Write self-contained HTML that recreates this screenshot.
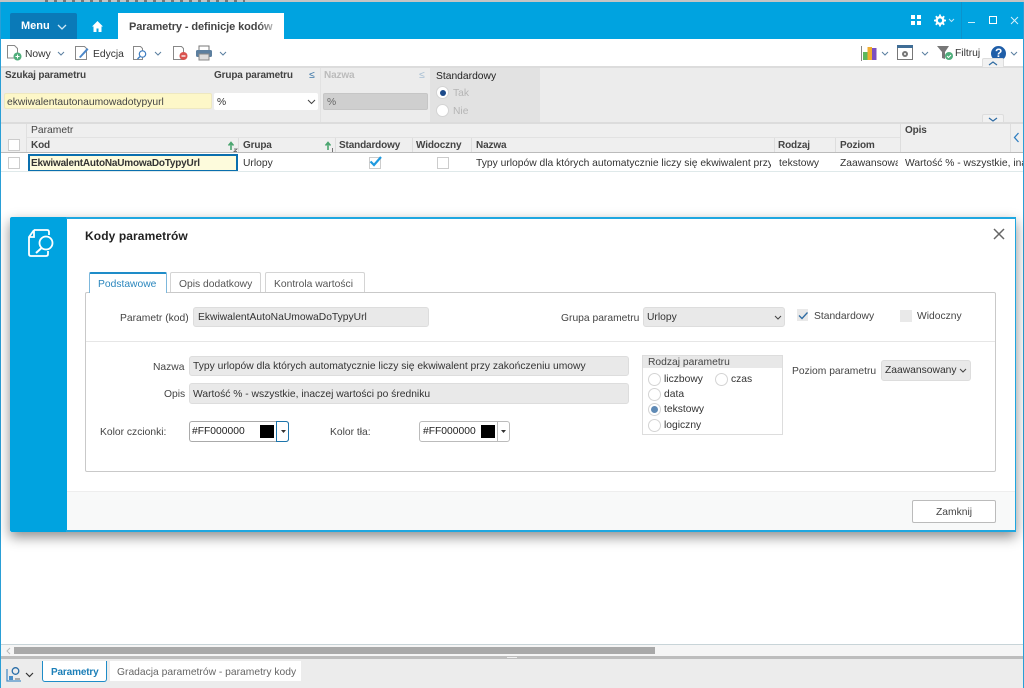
<!DOCTYPE html>
<html><head><meta charset="utf-8"><style>
html,body{margin:0;padding:0;background:#fff}
#p{position:relative;width:1024px;height:688px;overflow:hidden;background:#fff;font-family:"Liberation Sans",sans-serif;font-size:10.3px;color:#333;filter:blur(.3px)}
#p div,#p span.a,#p svg{position:absolute}
.t{white-space:nowrap;line-height:12px;margin-top:2px}
.b{font-weight:bold;font-size:10px;letter-spacing:-.15px}
.cb{width:10px;height:10px;border:1px solid #ccc;background:#fff;box-sizing:content-box}
.rd{width:11px;height:11px;border:1px solid #d4d4d4;border-radius:50%;background:#fff;margin-top:-1px}
.in{background:#e9e9e9;border:1px solid #ddd;border-radius:3px;box-sizing:border-box}
</style></head><body><div id="p">

<div style="left:0;top:0;width:1024px;height:2px;background:#c4c4c4"></div>
<div style="left:45px;top:0;width:200px;height:2px;background:repeating-linear-gradient(90deg,#777 0 3px,#c4c4c4 3px 9px)"></div>
<div style="left:0;top:2px;width:1024px;height:37px;background:#00a3e0"></div>
<div style="left:0;top:2px;width:1px;height:686px;background:#2a9fd6"></div>
<div style="left:1023px;top:2px;width:1px;height:686px;background:#2a9fd6"></div>

<div style="left:10px;top:13px;width:67px;height:26px;background:#0a7ab8;border-radius:2px 2px 0 0"></div>
<div class="t b" style="left:21px;top:18px;color:#fff;font-size:11px;letter-spacing:0">Menu</div>
<svg style="left:57px;top:24px" width="10" height="6"><path d="M1 1l4 4 4-4" fill="none" stroke="#cfe8f5" stroke-width="1.300"/></svg>
<svg style="left:91px;top:20px" width="13" height="13"><path d="M6.500 1L1 6.500h1.500V12h3V8.500h2V12h3V6.500H12z" fill="#fff"/></svg>
<div style="left:118px;top:13px;width:166px;height:26px;background:#fff"></div>
<div class="t b" style="left:129px;top:19px;font-size:11px;color:#444;width:146px;overflow:hidden;letter-spacing:-.1px">Parametry - definicje kodów</div>
<div style="left:258px;top:14px;width:24px;height:24px;background:linear-gradient(90deg,rgba(255,255,255,0),#fff)"></div>

<svg style="left:911px;top:15px" width="11" height="11"><path d="M0 0h4v4H0zM6 0h4v4H6zM0 6h4v4H0zM6 6h4v4H6z" fill="#fff"/></svg>
<svg style="left:934px;top:14px" width="22" height="13"><circle cx="6" cy="6.500" r="3.300" fill="none" stroke="#fff" stroke-width="2.400"/><path d="M6 .5v2M6 10.500v2M0 6.500h2M10 6.500h2M1.800 2.300l1.400 1.400M8.800 9.300l1.400 1.400M10.200 2.300L8.800 3.700M3.200 9.300l-1.400 1.400" stroke="#fff" stroke-width="1.800"/><path d="M15 5l2.500 2.500L20 5" fill="none" stroke="#bfe6f7"/></svg>
<div style="left:961px;top:2px;width:1px;height:37px;background:#0b93cc"></div>
<div style="left:968px;top:22px;width:7px;height:1px;background:#cdeefa"></div>
<div style="left:989px;top:16px;width:6px;height:6px;border:1px solid #fff"></div>
<svg style="left:1010px;top:16px" width="9" height="9"><path d="M1 1l7 7M8 1L1 8" stroke="#d5f0fb" stroke-width="1"/></svg>

<!-- toolbar -->
<div style="left:1px;top:39px;width:1022px;height:27px;background:#fff"></div>
<div style="left:1px;top:66px;width:1022px;height:2px;background:#dcdcdc"></div>
<svg style="left:7px;top:45px" width="15" height="16"><path d="M.5.500h7l3 3V13H.5z" fill="#fff" stroke="#888"/><circle cx="10.500" cy="11.500" r="4" fill="#4fae7b"/><path d="M8.500 11.500h4M10.500 9.500v4" stroke="#fff"/></svg>
<div class="t" style="left:25px;top:47px">Nowy</div>
<svg style="left:57px;top:51px" width="8" height="5"><path d="M1 1l3 3 3-3" fill="none" stroke="#5a7fa0"/></svg>
<svg style="left:75px;top:45px" width="15" height="16"><path d="M.5 1.500h9l2 2V14.500H.5z" fill="#fff" stroke="#888"/><path d="M4 12L12 3l1.500 1.500L5.500 13z" fill="#4a86c8"/></svg>
<div class="t" style="left:93px;top:47px">Edycja</div>
<svg style="left:133px;top:45px" width="15" height="16"><path d="M.5 1.500h7l2 2V14.500H.5z" fill="#fff" stroke="#888"/><circle cx="9.500" cy="9" r="3.200" fill="#fff" stroke="#3d7cc0" stroke-width="1.200"/><path d="M7 11.500l-2.500 2.500" stroke="#3d7cc0" stroke-width="1.300"/></svg>
<svg style="left:154px;top:51px" width="8" height="5"><path d="M1 1l3 3 3-3" fill="none" stroke="#5a7fa0"/></svg>
<svg style="left:173px;top:45px" width="15" height="16"><path d="M.5 1.500h8l2 2V14.500H.5z" fill="#fff" stroke="#888"/><circle cx="10.500" cy="11" r="4" fill="#d9534f"/><path d="M8.500 11h4" stroke="#fff" stroke-width="1.300"/></svg>
<svg style="left:196px;top:45px" width="16" height="16"><rect x="3" y="1" width="10" height="5" fill="#fff" stroke="#777"/><rect x="0" y="5" width="16" height="7" rx="1.500" fill="#5c7f9f"/><rect x="3" y="9" width="10" height="6" fill="#ddd" stroke="#888"/></svg>
<svg style="left:219px;top:51px" width="8" height="5"><path d="M1 1l3 3 3-3" fill="none" stroke="#5a7fa0"/></svg>

<svg style="left:861px;top:46px" width="17" height="15"><path d="M.5 0v15" stroke="#888"/><rect x="2" y="6" width="4.500" height="8" fill="#5cb85c"/><rect x="6.500" y="1" width="4.500" height="13" fill="#f0ad30"/><rect x="11" y="2" width="4.500" height="12" fill="#7b4fc0"/></svg>
<svg style="left:881px;top:51px" width="8" height="5"><path d="M1 1l3 3 3-3" fill="none" stroke="#5a7fa0"/></svg>
<svg style="left:897px;top:45px" width="17" height="16"><rect x=".5" y="1" width="15" height="13.500" fill="#fff" stroke="#777"/><rect x="0" y="0" width="16" height="3" fill="#3f6d96"/><circle cx="8" cy="9" r="3" fill="#777"/><circle cx="8" cy="9" r="1" fill="#fff"/></svg>
<svg style="left:921px;top:51px" width="8" height="5"><path d="M1 1l3 3 3-3" fill="none" stroke="#5a7fa0"/></svg>
<svg style="left:937px;top:46px" width="18" height="15"><path d="M0 0h12L8 6v7L5 12V6z" fill="#777"/><circle cx="12" cy="10" r="4" fill="#4fae7b"/><path d="M10 10l1.500 1.500L14 9" fill="none" stroke="#fff"/></svg>
<div class="t" style="left:955px;top:46px">Filtruj</div>
<div style="left:991px;top:46px;width:15px;height:15px;border-radius:50%;background:#1f5ea8"></div>
<div class="t b" style="left:995px;top:45px;color:#fff;font-size:12px">?</div>
<svg style="left:1010px;top:51px" width="8" height="5"><path d="M1 1l3 3 3-3" fill="none" stroke="#5a7fa0"/></svg>
<div style="left:982px;top:58px;width:22px;height:9px;background:#f1f1f1;border:1px solid #ddd;border-bottom:0;border-radius:2px 2px 0 0;box-sizing:border-box"></div>
<svg style="left:988px;top:61px" width="10" height="5"><path d="M1 4l4-3 4 3" fill="none" stroke="#2f6ca3" stroke-width="1.200"/></svg>

<!-- filter -->
<div style="left:1px;top:68px;width:1022px;height:54px;background:#ececec"></div>
<div style="left:430px;top:68px;width:110px;height:54px;background:#e2e2e2"></div>
<div style="left:320px;top:68px;width:1px;height:54px;background:#e2e2e2"></div>
<div class="t b" style="left:5px;top:68px;color:#444">Szukaj parametru</div>
<div class="t b" style="left:214px;top:68px;color:#444">Grupa parametru</div>
<div class="t" style="left:309px;top:68px;color:#3f78a8">≤</div>
<div class="t b" style="left:324px;top:68px;color:#bbb">Nazwa</div>
<div class="t" style="left:419px;top:68px;color:#a9c0d4">≤</div>
<div class="t" style="left:436px;top:69px;color:#222">Standardowy</div>
<div style="left:4px;top:93px;width:208px;height:16px;background:#fdf7c8;border:1px solid #eee8c0;box-sizing:border-box;border-radius:2px"></div>
<div class="t" style="left:7px;top:95px;color:#444">ekwiwalentautonaumowadotypyurl</div>
<div style="left:214px;top:93px;width:104px;height:17px;background:#fff;border-radius:2px"></div>
<div class="t" style="left:217px;top:95px">%</div>
<svg style="left:307px;top:99px" width="9" height="6"><path d="M1 1l3.500 3.500L8 1" fill="none" stroke="#444"/></svg>
<div style="left:323px;top:93px;width:105px;height:17px;background:#cfcfcf;border:1px solid #c6c6c6;box-sizing:border-box;border-radius:2px"></div>
<div class="t" style="left:327px;top:95px;color:#666">%</div>
<div class="rd" style="left:436px;top:87px"></div>
<div style="left:440px;top:90px;width:6px;height:6px;border-radius:50%;background:#1c4a8a"></div>
<div class="t" style="left:453px;top:86px;color:#b5b5b5">Tak</div>
<div class="rd" style="left:436px;top:105px"></div>
<div class="t" style="left:453px;top:104px;color:#b5b5b5">Nie</div>
<div style="left:982px;top:114px;width:22px;height:9px;background:#f1f1f1;border:1px solid #ddd;border-bottom:0;border-radius:2px 2px 0 0;box-sizing:border-box"></div>
<svg style="left:988px;top:117px" width="10" height="5"><path d="M1 1l4 3 4-3" fill="none" stroke="#2f6ca3" stroke-width="1.200"/></svg>

<!-- grid head -->
<div style="left:1px;top:122px;width:1022px;height:2px;background:#dcdcdc"></div>
<div style="left:1px;top:124px;width:1022px;height:28px;background:#efefef"></div>
<div style="left:26px;top:137px;width:1px;height:15px;background:#ddd"></div>
<div style="left:26px;top:124px;width:1px;height:28px;background:#e0e0e0"></div>
<div style="left:27px;top:137px;width:873px;height:1px;background:#e2e2e2"></div>
<div style="left:1px;top:152px;width:1022px;height:1px;background:#bbb"></div>
<div class="t" style="left:31px;top:123px;color:#444">Parametr</div>
<div class="t b" style="left:31px;top:138px;color:#444">Kod</div>
<div class="cb" style="left:8px;top:139px"></div>
<div class="t b" style="left:243px;top:138px;color:#444">Grupa</div>
<div class="t b" style="left:339px;top:138px;color:#444">Standardowy</div>
<div class="t b" style="left:416px;top:138px;color:#444">Widoczny</div>
<div class="t b" style="left:476px;top:138px;color:#444">Nazwa</div>
<div class="t b" style="left:778px;top:138px;color:#444">Rodzaj</div>
<div class="t b" style="left:840px;top:138px;color:#444">Poziom</div>
<div class="t b" style="left:905px;top:123px;color:#444">Opis</div>
<div style="left:238px;top:138px;width:1px;height:14px;background:#ddd"></div>
<div style="left:335px;top:138px;width:1px;height:14px;background:#ddd"></div>
<div style="left:412px;top:138px;width:1px;height:14px;background:#ddd"></div>
<div style="left:471px;top:138px;width:1px;height:14px;background:#ddd"></div>
<div style="left:774px;top:138px;width:1px;height:14px;background:#ddd"></div>
<div style="left:835px;top:138px;width:1px;height:14px;background:#ddd"></div>
<div style="left:900px;top:124px;width:1px;height:28px;background:#ddd"></div>
<div style="left:1010px;top:124px;width:1px;height:28px;background:#ddd"></div>
<svg style="left:1013px;top:132px" width="7" height="11"><path d="M5.500 1L1.500 5.500 5.500 10" fill="none" stroke="#2f7ec0" stroke-width="1.300"/></svg>
<svg style="left:227px;top:141px" width="11" height="11"><path d="M4 9V2M1.500 4.500L4 1.500 6.500 4.500" fill="none" stroke="#4aa56f" stroke-width="1.600"/><path d="M7 8h3l-3 2.500h3" fill="none" stroke="#555" stroke-width=".7"/></svg>
<svg style="left:324px;top:141px" width="11" height="11"><path d="M4 9V2M1.500 4.500L4 1.500 6.500 4.500" fill="none" stroke="#4aa56f" stroke-width="1.600"/><path d="M8.500 7v4" stroke="#555" stroke-width=".8"/></svg>

<!-- row -->
<div class="cb" style="left:8px;top:157px"></div>
<div style="left:28px;top:154px;width:210px;height:18px;background:#fdfbdc;border:2px solid #0a6fae;box-sizing:border-box"></div>
<div class="t b" style="left:31px;top:156px;color:#333;letter-spacing:-.2px">EkwiwalentAutoNaUmowaDoTypyUrl</div>
<div class="t" style="left:243px;top:156px">Urlopy</div>
<div class="cb" style="left:369px;top:157px"></div>
<svg style="left:369px;top:155px" width="13" height="12"><path d="M1.500 6.500L5 10 12 2" fill="none" stroke="#1e9ae0" stroke-width="2.200"/></svg>
<div class="cb" style="left:437px;top:157px"></div>
<div class="t" style="left:476px;top:156px;width:295px;overflow:hidden">Typy urlopów dla których automatycznie liczy się ekwiwalent przy zakończeniu umowy</div>
<div class="t" style="left:779px;top:156px">tekstowy</div>
<div class="t" style="left:840px;top:156px;width:58px;overflow:hidden">Zaawansowany</div>
<div class="t" style="left:905px;top:156px;width:118px;overflow:hidden">Wartość % - wszystkie, inaczej wartości po średniku</div>
<div style="left:1px;top:171px;width:1022px;height:1px;background:#dfe9ea"></div>

<!-- dialog -->
<div style="left:10px;top:217px;width:1006px;height:315px;background:#fff;box-shadow:0 5px 12px rgba(0,0,0,.45)"></div>
<div style="left:10px;top:217px;width:57px;height:315px;background:#00a3e0;border-radius:2px 0 0 2px"></div>
<div style="left:66px;top:217px;width:950px;height:2px;background:#1fa7e0"></div>
<div style="left:66px;top:530px;width:950px;height:2px;background:#1fa7e0"></div>
<div style="left:1015px;top:217px;width:1px;height:315px;background:#1fa7e0"></div>
<svg style="left:27px;top:228px" width="28" height="30"><path d="M14 2h6q2 0 2 2v3M7 2L2 9v17q0 2 2 2h15q2 0 2-2v-3M7 2h7M7 2v7H2" fill="none" stroke="#fff" stroke-width="1.800"/><circle cx="19" cy="15" r="6.500" fill="#00a3e0" stroke="#fff" stroke-width="1.800"/><path d="M14.500 20L9 25" stroke="#fff" stroke-width="2"/></svg>
<div class="t b" style="left:85px;top:228px;color:#222;font-size:12px;letter-spacing:.1px">Kody parametrów</div>
<svg style="left:993px;top:228px" width="12" height="12"><path d="M1 1l10 10M11 1L1 11" stroke="#666" stroke-width="1.500"/></svg>

<div style="left:85px;top:292px;width:911px;height:180px;border:1px solid #c9c9c9;box-sizing:border-box;border-radius:2px"></div>
<div style="left:86px;top:341px;width:909px;height:1px;background:#e6e6e6"></div>
<div style="left:89px;top:272px;width:78px;height:21px;background:#fff;border:1px solid #7db8dc;border-top:2px solid #1e8cc8;border-bottom:0;box-sizing:border-box;border-radius:2px 2px 0 0"></div>
<div class="t" style="left:98px;top:277px;color:#2a86bd">Podstawowe</div>
<div style="left:170px;top:272px;width:91px;height:20px;background:#fff;border:1px solid #d4d4d4;border-bottom:0;box-sizing:border-box;border-radius:2px 2px 0 0"></div>
<div class="t" style="left:179px;top:277px;color:#555">Opis dodatkowy</div>
<div style="left:265px;top:272px;width:100px;height:20px;background:#fff;border:1px solid #d4d4d4;border-bottom:0;box-sizing:border-box;border-radius:2px 2px 0 0"></div>
<div class="t" style="left:274px;top:277px;color:#555">Kontrola wartości</div>

<div class="t" style="left:120px;top:311px;color:#444">Parametr (kod)</div>
<div class="in" style="left:193px;top:307px;width:236px;height:20px"></div>
<div class="t" style="left:198px;top:310px">EkwiwalentAutoNaUmowaDoTypyUrl</div>
<div class="t" style="left:561px;top:311px;color:#444">Grupa parametru</div>
<div class="in" style="left:643px;top:307px;width:142px;height:20px"></div>
<div class="t" style="left:647px;top:310px">Urlopy</div>
<svg style="left:774px;top:315px" width="8" height="5"><path d="M1 1l3 3 3-3" fill="none" stroke="#444"/></svg>
<div style="left:797px;top:309px;width:11px;height:12px;background:#e9e9e9"></div>
<svg style="left:798px;top:311px" width="11" height="9"><path d="M1 4.500L4 7.500 9.500 1.500" fill="none" stroke="#2f6ca3" stroke-width="1.300"/></svg>
<div class="t" style="left:814px;top:309px;color:#444">Standardowy</div>
<div style="left:900px;top:310px;width:12px;height:12px;background:#e9e9e9"></div>
<div class="t" style="left:917px;top:309px;color:#444">Widoczny</div>

<div class="t" style="left:153px;top:360px;color:#444">Nazwa</div>
<div class="in" style="left:189px;top:356px;width:440px;height:20px"></div>
<div class="t" style="left:193px;top:359px">Typy urlopów dla których automatycznie liczy się ekwiwalent przy zakończeniu umowy</div>
<div class="t" style="left:164px;top:387px;color:#444">Opis</div>
<div class="in" style="left:189px;top:383px;width:440px;height:21px"></div>
<div class="t" style="left:193px;top:387px">Wartość % - wszystkie, inaczej wartości po średniku</div>

<div style="left:642px;top:355px;width:141px;height:80px;border:1px solid #ddd;box-sizing:border-box;background:#fff"></div>
<div style="left:643px;top:356px;width:139px;height:12px;background:#e8e8e8"></div>
<div class="t" style="left:648px;top:355px;color:#444">Rodzaj parametru</div>
<div class="rd" style="left:648px;top:374px"></div><div class="t" style="left:664px;top:372px">liczbowy</div>
<div class="rd" style="left:715px;top:374px"></div><div class="t" style="left:731px;top:372px">czas</div>
<div class="rd" style="left:648px;top:389px"></div><div class="t" style="left:664px;top:387px">data</div>
<div class="rd" style="left:648px;top:404px"></div><div style="left:651px;top:406px;width:7px;height:7px;border-radius:50%;background:#5f8ab5"></div><div class="t" style="left:664px;top:402px">tekstowy</div>
<div class="rd" style="left:648px;top:420px"></div><div class="t" style="left:664px;top:418px">logiczny</div>

<div class="t" style="left:792px;top:364px;color:#444">Poziom parametru</div>
<div class="in" style="left:881px;top:360px;width:90px;height:21px"></div>
<div class="t" style="left:885px;top:363px;width:72px;overflow:hidden">Zaawansowany</div>
<svg style="left:959px;top:368px" width="8" height="5"><path d="M1 1l3 3 3-3" fill="none" stroke="#444"/></svg>

<div class="t" style="left:100px;top:425px;color:#444">Kolor czcionki:</div>
<div style="left:189px;top:421px;width:100px;height:21px;border:1px solid #aaa;border-right-color:#1c74ab;box-sizing:border-box;border-radius:3px"></div>
<div style="left:276px;top:421px;width:1px;height:21px;background:#1c74ab"></div>
<div style="left:277px;top:421px;width:12px;height:21px;border:1px solid #1c74ab;border-left:0;box-sizing:border-box;border-radius:0 3px 3px 0"></div>
<div class="t" style="left:192px;top:424px;color:#222">#FF000000</div>
<div style="left:260px;top:425px;width:14px;height:13px;background:#000"></div>
<svg style="left:281px;top:430px" width="5" height="4"><path d="M0 0h5L2.500 3z" fill="#333"/></svg>

<div class="t" style="left:330px;top:425px;color:#444">Kolor tła:</div>
<div style="left:419px;top:421px;width:91px;height:21px;border:1px solid #bbb;box-sizing:border-box;border-radius:3px"></div>
<div style="left:497px;top:421px;width:1px;height:21px;background:#bbb"></div>
<div class="t" style="left:423px;top:424px;color:#222">#FF000000</div>
<div style="left:481px;top:425px;width:14px;height:13px;background:#000"></div>
<svg style="left:501px;top:430px" width="5" height="4"><path d="M0 0h5L2.500 3z" fill="#333"/></svg>

<div style="left:67px;top:491px;width:948px;height:39px;background:#f8f9f9;border-top:1px solid #eee;box-sizing:border-box"></div>
<div style="left:912px;top:500px;width:84px;height:23px;background:#fff;border:1px solid #bbb;box-sizing:border-box;border-radius:2px"></div>
<div class="t" style="left:936px;top:505px;color:#444">Zamknij</div>

<!-- bottom -->
<div style="left:1px;top:644px;width:1022px;height:1px;background:#c8d4d8"></div>
<div style="left:1px;top:645px;width:1022px;height:11px;background:#f5f5f5"></div>
<svg style="left:6px;top:647px" width="5" height="8"><path d="M4 1L1 4l3 3" fill="none" stroke="#bbb"/></svg>
<div style="left:14px;top:647px;width:641px;height:7px;background:#a9a9a9"></div>
<div style="left:1px;top:656px;width:1022px;height:3px;background:#bdbdbd"></div>
<div style="left:507px;top:657px;width:10px;height:1px;background:#eee"></div>
<div style="left:1px;top:659px;width:1022px;height:29px;background:#ececec"></div>
<svg style="left:6px;top:666px" width="16" height="16"><path d="M1 3v12h14" fill="none" stroke="#4a8ec8" stroke-width="1.300"/><circle cx="9.500" cy="5" r="3.300" fill="none" stroke="#2a6ea8" stroke-width="1.300"/><rect x="3" y="10" width="4" height="4" fill="#4a8ec8"/><rect x="9" y="12" width="5" height="2" fill="#aaa"/></svg>
<svg style="left:25px;top:672px" width="9" height="6"><path d="M1 1l3.500 3.500L8 1" fill="none" stroke="#333" stroke-width="1.200"/></svg>
<div style="left:42px;top:661px;width:65px;height:21px;background:#fff;border:1px solid #1e8cc8;border-top:0;box-sizing:border-box;border-radius:0 0 3px 3px"></div>
<div class="t b" style="left:51px;top:665px;color:#1c7fb8">Parametry</div>
<div style="left:110px;top:661px;width:191px;height:20px;background:#fff"></div>
<div class="t" style="left:117px;top:665px;color:#666">Gradacja parametrów - parametry kody</div>
</div></body></html>
